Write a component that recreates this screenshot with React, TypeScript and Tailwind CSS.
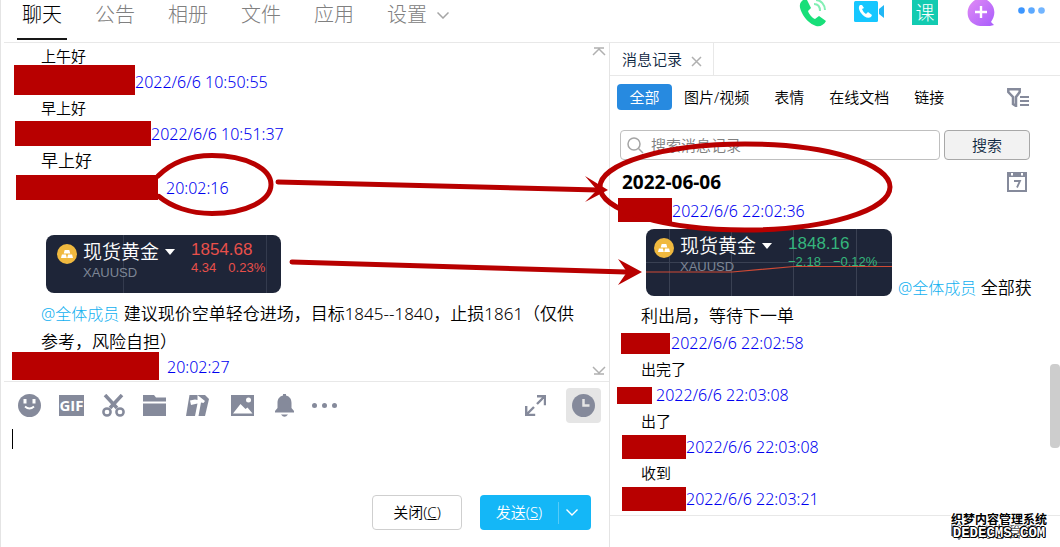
import type { ReactNode } from 'react';

type QuoteCardProps = {
  price: string;
  change: string;
  percent: string;
  tone: 'up' | 'down';
};

type HistoryMessage = {
  maskClass: string;
  time: string;
  text?: string;
};

const tabs = ['公告', '相册', '文件', '应用'];
const filters = ['图片/视频', '表情', '在线文档', '链接'];

const historyMessages: HistoryMessage[] = [
  { maskClass: 'h-[21px] w-[49px] ml-[11px] mr-px', time: '2022/6/6 22:02:58', text: '出完了' },
  { maskClass: 'h-[17px] w-[35px] ml-[7px] mr-1', time: '2022/6/6 22:03:08', text: '出了' },
  { maskClass: 'h-6 w-16 ml-3', time: '2022/6/6 22:03:08', text: '收到' },
  { maskClass: 'h-6 w-16 ml-3', time: '2022/6/6 22:03:21' },
];

const Mask = ({ className }: { className: string }) => (
  <span className={`block shrink-0 bg-[#b80000] ${className}`} />
);

const Time = ({ children }: { children: ReactNode }) => (
  <time className="text-base leading-[26px] text-[#0000f0]">{children}</time>
);

const Mention = () => (
  <a href="#members" className="text-base font-light text-[#12b0f0]">
    @全体成员
  </a>
);

const GoldBadge = () => (
  <svg viewBox="0 0 20 20" className="size-5 shrink-0">
    <circle cx="10" cy="10" r="10" fill="#f0b93f" />
    <path
      d="M7.7 6h4.6l1 3.600H6.700zM4.900 10.600h4l.9 3.300H4zM11.100 10.600h4l.9 3.300h-5.800z"
      fill="#fff"
    />
  </svg>
);

const QuoteCard = ({ price, change, percent, tone }: QuoteCardProps) => {
  const up = tone === 'up';

  return (
    <div
      className={`relative flex shrink-0 overflow-hidden rounded-lg bg-[#1e2538] pt-1.5 ${
        up ? 'h-[58px] w-[235px] pl-[11px]' : 'h-[67px] w-[246px] pl-2'
      }`}
    >
      {up ? (
        <svg viewBox="0 0 235 58" className="absolute inset-0 size-full" fill="none">
          <path d="M77.500 0v58M220.500 0v58" stroke="#343b4e" />
        </svg>
      ) : (
        <svg viewBox="0 0 246 67" className="absolute inset-0 size-full" fill="none">
          <path d="M23.500 0v67M85.500 0v67M147.500 0v67M210.500 0v67M0 33.500h246" stroke="#3a4153" />
          <path d="M0 43h86L148 37.500h98" stroke="#d04a35" strokeWidth="1.200" />
        </svg>
      )}
      <div className="relative flex gap-1.5">
        <div className="pt-[3px]">
          <GoldBadge />
        </div>
        <div>
          <div className="flex items-center gap-1.5">
            <span className="text-[19px] leading-[22px] text-white">现货黄金</span>
            <svg viewBox="0 0 10 6" className="h-1.5 w-2.5">
              <path d="M0 0h10L5 6z" fill="#fff" />
            </svg>
          </div>
          <div className="font-['Liberation_Sans'] text-[13px] leading-5 text-[#7d8595]">XAUUSD</div>
        </div>
      </div>
      <div
        className={`relative ml-4 font-['Liberation_Sans'] ${
          up ? 'text-[#e9504a]' : 'text-[#35b57c]'
        }`}
      >
        <div className="text-[17px] leading-[18px]">{price}</div>
        <div className="flex gap-3 text-[13px] leading-[18px]">
          <span>{change}</span>
          <span>{percent}</span>
        </div>
      </div>
    </div>
  );
};

const CallIcons = () => (
  <div className="flex items-start text-white">
    <button aria-label="语音通话" className="w-[55px]">
      <svg viewBox="0 0 28 27" className="h-[27px] w-7">
        <path
          d="M4 0C0 3 0 7 3 13c3 6 8 11 14 13 4 1 8-1 10-5l-7-5-4 3c-3-1-6-5-7-8l3-3-4-8z"
          fill="#18df79"
        />
        <path d="M17 0c5 0 9 5 9 10M15 4c4 0 6 3 6 7" fill="none" stroke="#83efb4" strokeWidth="2" />
      </svg>
    </button>
    <button aria-label="视频通话" className="w-[58px]">
      <svg viewBox="0 0 31 23" className="h-[23px] w-[31px]">
        <rect y="1" width="24" height="21" rx="1.500" fill="#16c7ff" />
        <path d="M25 9l5-4v13l-5-4z" fill="#20b7f5" />
        <path
          d="M6 5c-2 2-1 5 1 8 3 4 7 6 10 4l1-2-4-3-2 2c-2-1-3-3-4-5l2-1-2-3z"
          fill="#fff"
        />
      </svg>
    </button>
    <button
      aria-label="课堂"
      className="mr-[29px] h-[25px] w-[26px] bg-[#12cbb1] text-[19px] leading-[22px] font-light"
    >
      课
    </button>
    <button aria-label="添加" className="w-[51px]">
      <svg viewBox="0 0 28 26" className="h-[26px] w-7">
        <defs>
          <linearGradient id="plus" x1="0" y1="0" x2="1" y2="1">
            <stop stopColor="#e08af5" />
            <stop offset="1" stopColor="#a95dfc" />
          </linearGradient>
        </defs>
        <path
          d="M8 0h12c9 6 9 15 4 22l3 3-4 1H13C-2 24-3 7 8 0z"
          fill="url(#plus)"
        />
        <path d="M14 6v12M8 12h12" stroke="#fff" strokeWidth="2.400" />
      </svg>
    </button>
    <button aria-label="更多" className="pt-[7px]">
      <svg viewBox="0 0 28 7" className="h-[7px] w-7">
        <circle cx="3.500" cy="3.500" r="3.300" fill="#3c96ff" />
        <circle cx="13.500" cy="3.500" r="3.300" fill="#5ca9ff" />
        <circle cx="23.500" cy="3.500" r="3.300" fill="#72b5ff" />
      </svg>
    </button>
  </div>
);

const Header = () => (
  <header className="ml-[3px] flex h-[43px] items-start justify-between border-b border-[#e8e8e8] pl-[13px] pr-3.5">
    <nav className="flex gap-[33px] text-xl leading-[30px] font-light text-[#808080]">
      <a href="#chat" className="-mr-[5px] h-10 border-b-2 border-[#181818] px-[5px] text-black">
        聊天
      </a>
      {tabs.map((tab) => (
        <a key={tab} href="#tab">
          {tab}
        </a>
      ))}
      <a href="#settings" className="flex h-[30px] items-center gap-2.5">
        设置
        <svg viewBox="0 0 12 7" className="h-[7px] w-3" fill="none" stroke="#a5a5a5" strokeWidth="1.500">
          <path d="M.5.5L6 6 11.500.5" />
        </svg>
      </a>
    </nav>
    <CallIcons />
  </header>
);

const MessageList = () => (
  <section className="relative ml-[3px] border-b border-[#e8e8e8] pb-px text-black">
    <p className="pl-[37px] text-[15px] leading-[26px]">上午好</p>
    <div className="flex h-[26px] items-end pl-2.5">
      <Mask className="h-[30px] w-[121px]" />
      <Time>2022/6/6 10:50:55</Time>
    </div>
    <p className="pl-[37px] text-[15px] leading-[26px]">早上好</p>
    <div className="flex h-[26px] items-start pl-[11px]">
      <Mask className="h-[25px] w-[136px]" />
      <Time>2022/6/6 10:51:37</Time>
    </div>
    <p className="pl-[37px] text-[17px] leading-7">早上好</p>
    <div className="flex h-7 items-start gap-2 pl-3">
      <Mask className="h-[25px] w-[142px]" />
      <Time>20:02:16</Time>
    </div>
    <div className="ml-[42px] mt-8">
      <QuoteCard price="1854.68" change="4.34" percent="0.23%" tone="up" />
    </div>
    <p className="mt-[7px] pl-[37px] pr-5 text-[17px] leading-7">
      <Mention /> 建议现价空单轻仓进场，目标1845--1840，止损1861（仅供参考，风险自担）
    </p>
    <div className="flex h-6 items-end gap-2 pl-2">
      <Mask className="h-7 w-[147px]" />
      <Time>20:02:27</Time>
    </div>
    <button aria-label="滚动到顶部" className="absolute right-[3px] top-1">
      <svg viewBox="0 0 14 9" className="h-[9px] w-3.5" fill="none" stroke="#b0b0b0" strokeWidth="1.500">
        <path d="M2 1h10M1 8l6-6 6 6" />
      </svg>
    </button>
    <button aria-label="滚动到底部" className="absolute bottom-1.5 right-[3px]">
      <svg viewBox="0 0 14 9" className="h-[9px] w-3.5" fill="none" stroke="#b0b0b0" strokeWidth="1.500">
        <path d="M2 8h10M1 1l6 6 6-6" />
      </svg>
    </button>
  </section>
);

const Toolbar = () => (
  <div className="flex h-[47px] items-center pl-[17px] pr-2 text-[#858a9b]">
    <div className="flex grow items-center gap-[18px]">
      <button aria-label="表情">
        <svg viewBox="0 0 23 23" className="size-[23px]">
          <circle cx="11.500" cy="11.500" r="11.500" fill="currentColor" />
          <path d="M5.500 5v4.500h3V5M14.500 5v4.500h3V5" fill="#fff" />
          <path d="M7 12.500q4.500 4 9 0" fill="none" stroke="#fff" strokeWidth="1.800" />
        </svg>
      </button>
      <button
        aria-label="动图"
        className="h-[21px] w-[25px] bg-[#858a9b] font-['Open_Sans'] text-[15px] leading-[21px] font-bold text-white"
      >
        GIF
      </button>
      <button aria-label="截图">
        <svg viewBox="0 0 23 23" className="size-[23px]" fill="none" stroke="currentColor">
          <path d="M3 1l12 13M20 1L8 14" strokeWidth="3.500" />
          <circle cx="5" cy="18" r="3.600" strokeWidth="2.500" />
          <circle cx="18" cy="18" r="3.600" strokeWidth="2.500" />
        </svg>
      </button>
      <button aria-label="文件">
        <svg viewBox="0 0 23 21" className="h-[21px] w-[23px]" fill="currentColor">
          <path d="M0 0h11l2 2.500h10v4H0zM0 8.500h23V21H0z" />
        </svg>
      </button>
      <button aria-label="群文件">
        <svg viewBox="0 0 23 21" className="mx-0.5 h-[21px] w-[23px]">
          <path d="M3.500 0H19l4 4-4 17H0z" fill="currentColor" />
          <path d="M11.500 0l7.500 6-1.500 2-2.500-.5L12.500 21H9l2.500-12.500L5 10 4 5.500l5-1 2.500.5z" fill="#fff" />
        </svg>
      </button>
      <button aria-label="图片">
        <svg viewBox="0 0 23 21" className="ml-0.5 h-[21px] w-[23px]">
          <path d="M0 0h23v21H0z" fill="currentColor" />
          <path d="M2 18.500L9.500 9l5 5 2-1.500 5 6z" fill="#fff" />
          <circle cx="17.500" cy="5" r="2.500" fill="#fff" />
        </svg>
      </button>
      <button aria-label="提醒">
        <svg viewBox="0 0 19 23" className="ml-[3px] h-[23px] w-[19px]" fill="currentColor">
          <path d="M8 0h3v1.500c4 1 5.500 4 5.500 7.500v5l2.500 3v1.500H0V17l2.500-3V9C2.500 5.500 4 2.500 8 1.500zM6 20.500h7q-3.500 4.500-7 0z" />
        </svg>
      </button>
      <button aria-label="更多功能">
        <svg viewBox="0 0 25 5" className="h-[5px] w-[25px]" fill="currentColor">
          <circle cx="2.500" cy="2.500" r="2.500" />
          <circle cx="12.500" cy="2.500" r="2.500" />
          <circle cx="22.500" cy="2.500" r="2.500" />
        </svg>
      </button>
    </div>
    <button aria-label="展开" className="mr-5">
      <svg viewBox="0 0 21 21" className="size-[21px]" fill="none" stroke="currentColor" strokeWidth="2.400">
        <path d="M12 1.200h8v9M20 1l-8 8M1.200 11v9h9M1 20l8-8" />
      </svg>
    </button>
    <button
      aria-label="消息记录"
      className="flex size-[35px] items-center justify-center rounded-sm bg-[#e5e5e5]"
    >
      <svg viewBox="0 0 23 23" className="size-[23px]">
        <circle cx="11.500" cy="11.500" r="11.500" fill="currentColor" />
        <path d="M11.500 5v6.500h6" fill="none" stroke="#e5e5e5" strokeWidth="2.500" />
      </svg>
    </button>
  </div>
);

const Composer = () => (
  <section className="flex grow flex-col">
    <Toolbar />
    <div className="flex grow pl-[11px]">
      <span className="h-5 w-px bg-black" />
      <textarea aria-label="输入消息" className="grow resize-none outline-none" />
    </div>
    <div className="flex justify-end gap-[18px] pb-[17px] pr-[18px] text-[15px]">
      <button className="h-[35px] w-[90px] rounded-sm border border-[#cfcfcf] text-black">
        关闭(<u>C</u>)
      </button>
      <div className="flex h-[35px] items-center rounded-sm bg-[#14b7f7] text-white">
        <button className="w-[78px]">
          发送(<u>S</u>)
        </button>
        <button
          aria-label="发送选项"
          className="flex h-[22px] w-[33px] items-center border-l border-[#55cbf8] pl-[7px]"
        >
          <svg viewBox="0 0 12 7" className="h-[7px] w-3" fill="none" stroke="currentColor" strokeWidth="1.400">
            <path d="M.5.5L6 6 11.500.5" />
          </svg>
        </button>
      </div>
    </div>
  </section>
);

const HistoryPanel = () => (
  <aside className="relative flex w-[451px] shrink-0 flex-col border-l border-[#e4e4e4] text-[15px] text-black">
    <div className="flex h-[33px] border-b border-[#e8e8e8]">
      <div className="flex w-[104px] items-center gap-[9px] border-r border-[#e8e8e8] pl-3 text-[#0d2640]">
        消息记录
        <button aria-label="关闭消息记录">
          <svg viewBox="0 0 11 11" className="mt-1 size-[11px]" stroke="#b0b0b0" strokeWidth="1.500">
            <path d="M1 1l9 9M10 1l-9 9" />
          </svg>
        </button>
      </div>
    </div>
    <div className="flex items-center gap-[25px] pl-[7px] pr-[31px] pt-2">
      <button className="-mr-[13px] h-[26px] w-[55px] rounded-sm bg-[#278ae0] text-white">全部</button>
      {filters.map((filter) => (
        <button key={filter}>{filter}</button>
      ))}
      <button aria-label="筛选" className="ml-auto">
        <svg viewBox="0 0 22 19" className="h-[19px] w-[22px]" fill="none" stroke="#858a9b" strokeWidth="2.500">
          <path d="M1.300 1.300h11.400v2.700L9 9v9l-3-2V9L1.300 4z" />
          <path d="M13 9h9M13 13h9M13 17h9" strokeWidth="2.200" />
        </svg>
      </button>
    </div>
    <form className="flex gap-1 pl-2.5 pr-[30px] pt-5">
      <label className="flex h-[30px] grow items-center gap-[7px] rounded-sm border border-[#bfbfbf] pl-1.5">
        <svg viewBox="0 0 17 17" className="size-[17px]" fill="none" stroke="#a5a5a5" strokeWidth="1.500">
          <circle cx="7" cy="7" r="6" />
          <path d="M11.500 11.500L16 16" />
        </svg>
        <input
          aria-label="搜索消息记录"
          placeholder="搜索消息记录"
          className="min-w-0 grow outline-none placeholder:text-[#808080]"
        />
      </label>
      <button className="w-[86px] rounded-sm border border-[#a8a8a8] bg-[#f2f2f2] text-[#0d2640]">
        搜索
      </button>
    </form>
    <div className="flex h-[38px] items-center justify-between pl-3 pr-[33px] pt-1.5">
      <h2 className="text-[19px] leading-6 font-bold">2022-06-06</h2>
      <button aria-label="选择日期">
        <svg viewBox="0 0 20 20" className="size-5" fill="none" stroke="#858a9b">
          <path d="M1 2.500h18v16.500H1z" strokeWidth="2" />
          <path d="M0 2.500h20" strokeWidth="5" />
          <path d="M5 1v2.500M15 1v2.500" stroke="#fff" strokeWidth="2" />
          <path d="M7 9h6l-3 6.500" strokeWidth="1.800" />
        </svg>
      </button>
    </div>
    <div className="flex h-[26px] items-start pl-2">
      <Mask className="h-6 w-[54px]" />
      <Time>2022/6/6 22:02:36</Time>
    </div>
    <div className="mt-[5px] flex items-end pl-9 text-[17px] leading-7">
      <div className="mb-1.5 mr-1.5">
        <QuoteCard price="1848.16" change="−2.18" percent="−0.12%" tone="down" />
      </div>
      <p>
        <Mention /> 全部获
      </p>
    </div>
    <p className="pl-[31px] text-[17px] leading-7">利出局，等待下一单</p>
    {historyMessages.map((message) => (
      <div key={message.time + message.maskClass + message.text}>
        <div className="flex h-[26px] items-center">
          <Mask className={message.maskClass} />
          <Time>{message.time}</Time>
        </div>
        {message.text && <p className="pl-[31px] leading-[26px]">{message.text}</p>}
      </div>
    ))}
    <div className="mt-[3px] flex grow items-center justify-end gap-2 border-t border-[#e8e8e8] pr-[23px] text-[#555]">
      <svg viewBox="0 0 18 16" className="h-4 w-[18px]" fill="none" stroke="#858a9b" strokeWidth="2">
        <path d="M1 1h16v10h-6l-3 4-2-4H1z" />
      </svg>
      消息管理
    </div>
    <div className="absolute right-0 top-[321px] h-[84px] w-2.5 rounded bg-[#cdcdcd]" />
    <div className="absolute bottom-2 right-3 w-[98px] text-center font-bold">
      <div className="text-xs leading-[14px] text-black [text-shadow:1px_0_#fff,-1px_0_#fff,0_1px_#fff,0_-1px_#fff,1px_1px_#fff,-1px_-1px_#fff]">
        织梦内容管理系统
      </div>
      <div className="font-['Liberation_Mono'] text-sm leading-3 text-white [text-shadow:1px_0_#000,-1px_0_#000,0_1px_#000,0_-1px_#000,1px_1px_#000,-1px_-1px_#000]">
        DEDECMS.COM
      </div>
    </div>
  </aside>
);

// Hand-drawn red circles and arrows that float over both panes.
const Annotations = () => (
  <svg
    viewBox="0 0 1060 547"
    className="pointer-events-none absolute -left-px top-0 h-[547px] w-[1060px]"
    fill="none"
    stroke="#b80000"
    strokeWidth="5"
    strokeLinecap="round"
  >
    <path d="M158 176C172 162 190 155.500 212 155.500c34 0 59 13 59 29s-25 29-59 29c-22 0-41-7-53-17" />
    <ellipse cx="745" cy="187" rx="145" ry="43" />
    <path d="M278 182L598 190M292 262l334 10" />
    <path
      d="M608 190l-23-14 12 14-12 12zM642 272l-24-13 9 13-9 13z"
      fill="#b80000"
      stroke="none"
    />
  </svg>
);

const App = () => (
  <div className="relative flex min-h-screen flex-col overflow-hidden border-l border-[#e4e4e4] bg-white font-['Noto_Sans','Noto_Sans_CJK_SC',sans-serif] font-[350]">
    <Header />
    <div className="flex grow">
      <main className="flex min-w-0 grow flex-col">
        <MessageList />
        <Composer />
      </main>
      <HistoryPanel />
    </div>
    <Annotations />
  </div>
);

export default App;
